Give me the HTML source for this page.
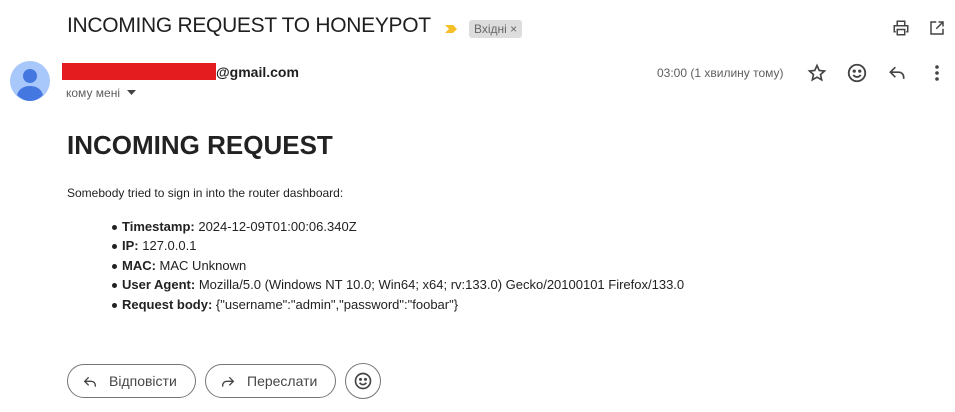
<!DOCTYPE html>
<html><head><meta charset="utf-8"><style>
body{margin:0;width:955px;height:412px;background:#fff;font-family:"Liberation Sans",Arial,sans-serif;color:#222;position:relative;overflow:hidden}
.a{position:absolute;white-space:nowrap}
.btn{position:absolute;top:364px;height:34px;border:1px solid #747775;border-radius:18px;font-size:14px;color:#444746;box-sizing:border-box}
ul{margin:0;padding:0;list-style:none}
li{position:absolute;left:122px;font-size:13px;color:#222}
li:before{content:"";position:absolute;left:-10px;top:6px;width:5px;height:5px;border-radius:50%;background:#222}
</style></head><body>
<div class="a" style="left:67px;top:14px;font-size:21px;color:#1f1f1f;letter-spacing:-0.3px">INCOMING REQUEST TO HONEYPOT</div>
<svg class="a" style="left:444px;top:23px" width="16" height="12" viewBox="0 0 16 12"><path d="M1 2h8l4 4-4 4H1l4-4z" fill="#f6bf26"/></svg>
<div class="a" style="left:469px;top:20px;height:18px;padding:0 5px;background:#ddd;border-radius:3px;font-size:12px;line-height:18px;color:#666">Вхідні ×</div>
<svg class="a" style="left:892px;top:19px" width="18" height="18" viewBox="0 0 24 24" fill="none" stroke="#444" stroke-width="2"><path d="M7 8V3h10v5M5 17H3V9h18v8h-2M7 14h10v7H7z"/></svg>
<svg class="a" style="left:928px;top:19px" width="18" height="18" viewBox="0 0 24 24" fill="none" stroke="#444" stroke-width="2"><path d="M11 4H4v16h16v-7M14 4h6v6M20 4l-9 9"/></svg>
<svg class="a" style="left:10px;top:61px" width="40" height="40" viewBox="0 0 40 40"><circle cx="20" cy="20" r="20" fill="#a8c7fa"/><circle cx="20" cy="15" r="7" fill="#4477e0"/><path d="M7 34c2-7 8-9 13-9s11 2 13 9c-4 4-8 6-13 6s-9-2-13-6z" fill="#4477e0"/></svg>
<div class="a" style="left:62px;top:63px;width:154px;height:17px;background:#e41b1f"></div>
<div class="a" style="left:216px;top:64px;font-size:14px;font-weight:bold;color:#1f1f1f">@gmail.com</div>
<div class="a" style="left:66px;top:86px;font-size:12px;color:#5e5e5e">кому мені</div>
<svg class="a" style="left:127px;top:90px" width="9" height="6"><path d="M0 0h9L4.5 5z" fill="#444"/></svg>
<div class="a" style="left:657px;top:66px;font-size:12px;color:#5e5e5e">03:00 (1 хвилину тому)</div>
<svg class="a" style="left:807px;top:63px" width="20" height="20" viewBox="0 0 24 24" fill="none" stroke="#444" stroke-width="2"><path d="M12 3l2.7 6 6.3.6-4.8 4.3 1.4 6.3L12 17l-5.6 3.2 1.4-6.3L3 9.6 9.3 9z"/></svg>
<svg class="a" style="left:846px;top:62px" width="22" height="22" viewBox="0 0 24 24" fill="none" stroke="#444" stroke-width="2"><circle cx="12" cy="12" r="9"/><circle cx="9" cy="10" r=".8" fill="#444"/><circle cx="15" cy="10" r=".8" fill="#444"/><path d="M8 14c2 3 6 3 8 0"/></svg>
<svg class="a" style="left:887px;top:63px" width="20" height="20" viewBox="0 0 24 24" fill="none" stroke="#444" stroke-width="2"><path d="M10 5L4 11l6 6M4 11h10a6 6 0 016 6v2"/></svg>
<svg class="a" style="left:928px;top:63px" width="18" height="20" viewBox="0 0 18 20"><circle cx="9" cy="4" r="1.8" fill="#444"/><circle cx="9" cy="10" r="1.8" fill="#444"/><circle cx="9" cy="16" r="1.8" fill="#444"/></svg>
<div class="a" style="left:67px;top:130px;font-size:26px;font-weight:bold;color:#222">INCOMING REQUEST</div>
<div class="a" style="left:67px;top:186px;font-size:12px">Somebody tried to sign in into the router dashboard:</div>
<ul>
<li style="top:219px"><b>Timestamp:</b> 2024-12-09T01:00:06.340Z</li>
<li style="top:238px"><b>IP:</b> 127.0.0.1</li>
<li style="top:258px"><b>MAC:</b> MAC Unknown</li>
<li style="top:277px"><b>User Agent:</b> Mozilla/5.0 (Windows NT 10.0; Win64; x64; rv:133.0) Gecko/20100101 Firefox/133.0</li>
<li style="top:297px"><b>Request body:</b> {"username":"admin","password":"foobar"}</li>
</ul>
<div class="btn" style="left:67px;width:129px"><svg class="a" style="left:14px;top:9px" width="16" height="16" viewBox="0 0 24 24" fill="none" stroke="#444" stroke-width="2"><path d="M10 5L4 11l6 6M4 11h10a6 6 0 016 6v2"/></svg><span class="a" style="left:41px;top:8px">Відповісти</span></div>
<div class="btn" style="left:205px;width:131px"><svg class="a" style="left:14px;top:9px" width="16" height="16" viewBox="0 0 24 24" fill="none" stroke="#444" stroke-width="2"><path d="M14 5l6 6-6 6M20 11H10a6 6 0 00-6 6v2"/></svg><span class="a" style="left:41px;top:8px">Переслати</span></div>
<div class="btn" style="left:345px;width:36px;height:36px;top:363px"><svg class="a" style="left:7px;top:7px" width="20" height="20" viewBox="0 0 24 24" fill="none" stroke="#444" stroke-width="2"><circle cx="12" cy="12" r="9"/><circle cx="9" cy="10" r=".8" fill="#444"/><circle cx="15" cy="10" r=".8" fill="#444"/><path d="M8 14c2 3 6 3 8 0"/></svg></div>
</body></html>
